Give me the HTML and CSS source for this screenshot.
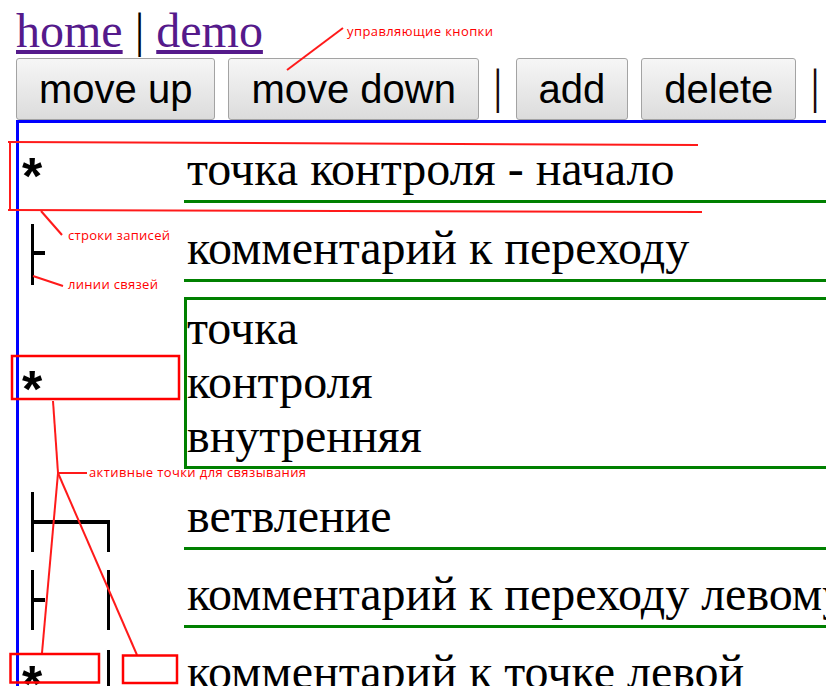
FILE: index.html
```html
<!DOCTYPE html>
<html lang="ru">
<head>
<meta charset="utf-8">
<title>demo</title>
<link rel="stylesheet" href="styles.css">
</head>
<body>
<div class="nav"><a href="#" class="lnk">home</a> | <a href="#" class="lnk">demo</a></div>
<div class="toolbar">
  <button class="btn">move up</button><button class="btn">move down</button><span class="sep">|</span><button class="btn">add</button><button class="btn">delete</button><span class="sep">|</span>
</div>
<div class="tree">
  <div class="row r1">
    <svg class="gutter" width="165" height="65"><text class="star" x="3" y="56">*</text></svg>
    <div class="cell">точка контроля - начало</div>
  </div>
  <div class="row r2">
    <svg class="gutter" width="165" height="68"><rect x="12" y="7" width="3" height="61"/><rect x="12" y="34" width="14" height="4"/></svg>
    <div class="cell">комментарий к переходу</div>
  </div>
  <div class="row r3">
    <svg class="gutter" width="165" height="172"><text class="star" x="3" y="110">*</text></svg>
    <div class="cell box">точка<br>контроля<br>внутренняя</div>
  </div>
  <div class="row r4">
    <svg class="gutter" width="165" height="67"><rect x="12" y="7" width="3" height="60"/><rect x="12" y="35" width="79" height="4"/><rect x="88" y="35" width="3" height="32"/></svg>
    <div class="cell">ветвление</div>
  </div>
  <div class="row r5">
    <svg class="gutter" width="165" height="67"><rect x="12" y="7" width="3" height="60"/><rect x="12" y="35" width="14" height="4"/><rect x="88" y="7" width="3" height="60"/></svg>
    <div class="cell">комментарий к переходу левому</div>
  </div>
  <div class="row r6">
    <svg class="gutter" width="165" height="65"><text class="star" x="3" y="61">*</text><rect x="88" y="9" width="3" height="60"/></svg>
    <div class="cell">комментарий к точке левой</div>
  </div>
</div>
<svg class="notes" width="826" height="686" viewBox="0 0 826 686">
  <g class="ln">
    <line x1="287" y1="70" x2="343" y2="28"/>
    <line x1="8" y1="142" x2="698" y2="145"/>
    <line x1="10" y1="142" x2="10" y2="211"/>
    <line x1="8" y1="210" x2="702" y2="212"/>
    <line x1="41" y1="211" x2="62" y2="235"/>
    <line x1="33" y1="276" x2="63" y2="286"/>
    <line x1="53" y1="401" x2="58" y2="473"/>
    <line x1="58" y1="473" x2="87" y2="473"/>
    <line x1="58" y1="473" x2="42" y2="653"/>
    <line x1="58" y1="473" x2="137" y2="655"/>
  </g>
  <g class="bx">
    <rect x="12" y="356" width="167" height="43"/>
    <rect x="10.5" y="654" width="88.5" height="28.5"/>
    <rect x="123" y="655.5" width="54" height="27.5"/>
  </g>
  <g class="lbl">
    <text x="347" y="36" textLength="146">управляющие кнопки</text>
    <text x="68" y="240" textLength="102">строки записей</text>
    <text x="68" y="289" textLength="90">линии связей</text>
    <text x="89" y="477" textLength="217">активные точки для связывания</text>
  </g>
</svg>
</body>
</html>
```
FILE: styles.css
```css
html, body {
  overflow: hidden;
}
body {
  margin: 3px 0 0 16px;
  font-family: "Liberation Serif", "Times New Roman", serif;
  font-size: 48px;
  color: #000;
  background: #fff;
}
.nav {
  white-space: nowrap;
}
.lnk {
  color: #551a8b;
  text-decoration: underline;
}
.toolbar {
  display: flex;
  align-items: baseline;
  white-space: nowrap;
}
.btn {
  font-family: "Liberation Sans", Arial, sans-serif;
  font-size: 40px;
  height: 62px;
  padding: 0 22px;
  margin: 0 13px 0 0;
  border: 1px solid #a3a3a3;
  border-radius: 3px;
  background: linear-gradient(#f6f6f6, #dcdcdc);
  color: #000;
}
.sep {
  margin: 0 13px 0 1px;
  color: #1a0a0a;
}
.tree {
  width: 1100px;
  border-top: 3px solid #0000ff;
  border-left: 3px solid #0000ff;
}
.row {
  display: flex;
  align-items: flex-start;
}
.r1 { margin-top: 15px; }
.r2 { margin-top: 14px; }
.r3 { margin-top: 12px; }
.r4 { margin-top: 16px; }
.r5 { margin-top: 11px; }
.r6 { margin-top: 11px; }
.gutter {
  flex: none;
  display: block;
  overflow: visible;
  fill: #000;
}
.star {
  font-family: "Liberation Sans", Arial, sans-serif;
  font-weight: bold;
  font-size: 52px;
}
.cell {
  flex: 1;
  line-height: 54px;
  padding: 4px 0 4px 3px;
  border-bottom: 3px solid #008000;
  white-space: nowrap;
}
.cell.box {
  border: 3px solid #008000;
  padding: 1px 0 3px 0;
}
.notes {
  position: absolute;
  left: 0;
  top: 0;
  pointer-events: none;
}
.ln line {
  stroke: #ff1a1a;
  stroke-width: 2;
}
.bx rect {
  fill: none;
  stroke: #ff0000;
  stroke-width: 2.5;
}
.lbl text {
  fill: #ff0000;
  font-family: "Open Sans", "Noto Sans", sans-serif;
  font-size: 13px;
}
```
